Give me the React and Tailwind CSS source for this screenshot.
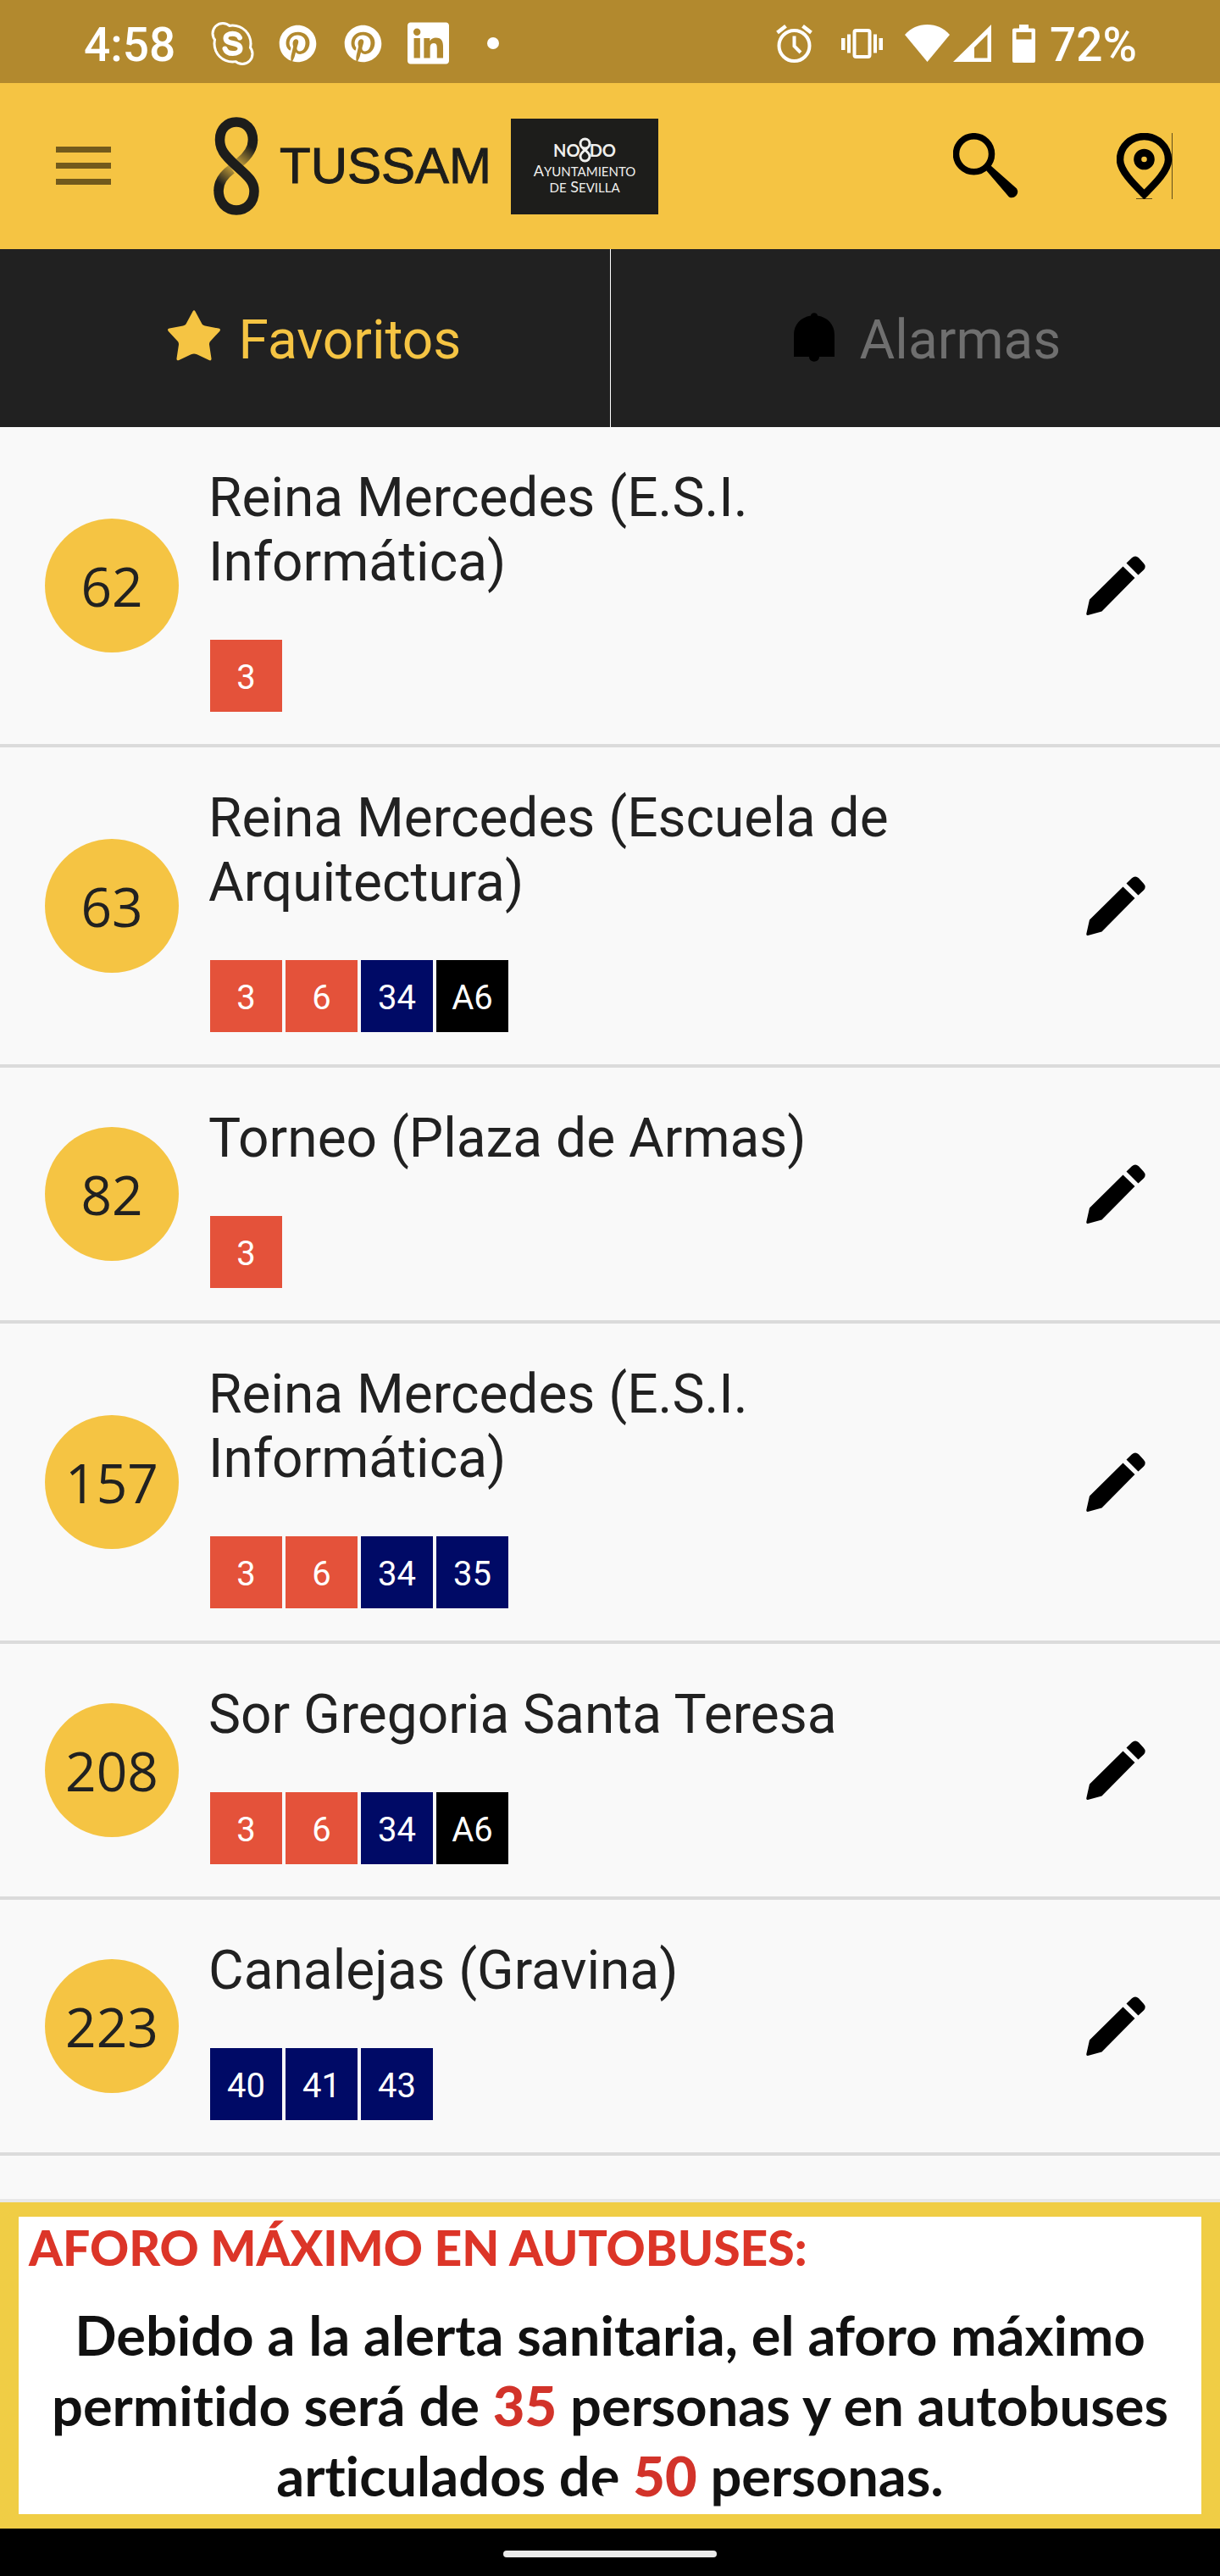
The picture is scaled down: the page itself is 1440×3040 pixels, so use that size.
import { FaLinkedin, FaPinterest } from "react-icons/fa";

const RED = "bg-[#e4523a]";
const NAVY = "bg-[#000a66]";
const BLACK = "bg-black";

const stops = [
  { id: 62, name: "Reina Mercedes (E.S.I. Informática)", lines: [["3", RED]] },
  {
    id: 63,
    name: "Reina Mercedes (Escuela de Arquitectura)",
    lines: [["3", RED], ["6", RED], ["34", NAVY], ["A6", BLACK]],
  },
  { id: 82, name: "Torneo (Plaza de Armas)", lines: [["3", RED]] },
  {
    id: 157,
    name: "Reina Mercedes (E.S.I. Informática)",
    lines: [["3", RED], ["6", RED], ["34", NAVY], ["35", NAVY]],
  },
  {
    id: 208,
    name: "Sor Gregoria Santa Teresa",
    lines: [["3", RED], ["6", RED], ["34", NAVY], ["A6", BLACK]],
  },
  { id: 223, name: "Canalejas (Gravina)", lines: [["40", NAVY], ["41", NAVY], ["43", NAVY]] },
];

function SkypeIcon() {
  return (
    <svg className="h-[51px] w-[51px]" viewBox="0 0 51 51" aria-hidden="true">
      <g fill="#fff">
        <circle cx="25.5" cy="25.5" r="23" />
        <circle cx="14" cy="13.5" r="13.5" />
        <circle cx="37" cy="37.5" r="13.5" />
      </g>
      <g fill="#b2892e">
        <circle cx="25.5" cy="25.5" r="20" />
        <circle cx="14" cy="13.5" r="10.5" />
        <circle cx="37" cy="37.5" r="10.5" />
      </g>
      <path
        d="M34 18.5C32.5 15 29.5 13.8 25.5 13.8c-4.5 0-8 2-8 5.400 0 8 17 3.600 17 12 0 3.800-4 5.900-8.700 5.900-4.800 0-8-1.900-9.300-5.600"
        fill="none"
        stroke="#fff"
        strokeWidth="6"
        strokeLinecap="round"
      />
    </svg>
  );
}

function AlarmIcon() {
  return (
    <svg className="h-[45px] w-[43px]" viewBox="0 0 43 45" fill="none" stroke="#fff" aria-hidden="true">
      <circle cx="21.5" cy="25" r="18" strokeWidth="4" />
      <path d="M1.5 9.5 11.5 1.800M41.5 9.5 31.5 1.800" strokeWidth="4.5" />
      <path d="M21.5 13.5v12l7.5 7.5" strokeWidth="4" />
    </svg>
  );
}

function VibrateIcon() {
  return (
    <svg className="h-[35px] w-[49px]" viewBox="0 0 49 35" aria-hidden="true">
      <rect x="15.5" y="2" width="18" height="31" rx="2" fill="none" stroke="#fff" strokeWidth="4" />
      <path d="M0 11h4.500v14H0zM7 6.500h4v22H7zM38 6.500h4v22h-4zM44.500 11H49v14h-4.500z" fill="#fff" />
    </svg>
  );
}

function WifiIcon() {
  return (
    <svg className="h-[44px] w-[53px]" viewBox="0 0 53 44" fill="#fff" aria-hidden="true">
      <path d="M0 12C7 4 16 0 26.5 0S46 4 53 12L26.5 44z" />
    </svg>
  );
}

function SignalIcon() {
  return (
    <svg className="h-[44px] w-[45px]" viewBox="0 0 45 44" fill="#fff" aria-hidden="true">
      <path fillRule="evenodd" d="M45 0v44H0zM40.5 11.5 25 27v12.500h15.500z" />
    </svg>
  );
}

function BatteryIcon() {
  return (
    <svg className="h-[45px] w-[27px]" viewBox="0 0 27 45" fill="#fff" aria-hidden="true">
      <path
        fillRule="evenodd"
        d="M8 0h11v4.500h6a2 2 0 0 1 2 2V43a2 2 0 0 1-2 2H2a2 2 0 0 1-2-2V6.500a2 2 0 0 1 2-2h6zM4.500 9v8.500h18V9z"
      />
    </svg>
  );
}

function StatusBar() {
  return (
    <div className="flex h-[98px] items-center justify-between bg-[#b2892e] pt-2 pr-[98px] pl-[99px] font-['Roboto',sans-serif] text-[55px] leading-none font-medium text-white">
      <div className="flex items-center">
        <span className="w-[109px] whitespace-nowrap">4:58</span>
        <div className="mb-1 ml-[41px] flex items-center">
          <SkypeIcon />
          <FaPinterest className="ml-[29px] h-[45px] w-[45px]" />
          <FaPinterest className="ml-8 h-[45px] w-[45px]" />
          <FaLinkedin className="ml-[30px] h-[56px] w-[49px]" />
          <span className="ml-[45px] h-3.5 w-3.5 rounded-full bg-white" />
        </div>
      </div>
      <div className="flex items-center">
        <div className="mb-1 flex items-center">
          <AlarmIcon />
          <span className="ml-[34px]"><VibrateIcon /></span>
          <span className="ml-[26px]"><WifiIcon /></span>
          <span className="ml-1"><SignalIcon /></span>
          <span className="ml-[25px]"><BatteryIcon /></span>
        </div>
        <span className="ml-[17px]">72%</span>
      </div>
    </div>
  );
}

function EightLogo() {
  return (
    <svg className="h-[116px] w-[54px]" viewBox="0 0 54 116" fill="none" strokeWidth="11.5" aria-hidden="true">
      <defs>
        <linearGradient id="fadeUp" gradientUnits="userSpaceOnUse" x1="45" y1="36" x2="31" y2="54">
          <stop offset="0" stopColor="#1d1d1b" />
          <stop offset="1" stopColor="#1d1d1b" stopOpacity="0.3" />
        </linearGradient>
        <linearGradient id="fadeDown" gradientUnits="userSpaceOnUse" x1="8" y1="79" x2="22" y2="62">
          <stop offset="0" stopColor="#1d1d1b" />
          <stop offset="1" stopColor="#1d1d1b" stopOpacity="0.3" />
        </linearGradient>
      </defs>
      <path d="M46.5 27C46.5 38 40.5 46 30.5 54" stroke="url(#fadeUp)" />
      <path d="M6 87C6 77 11 69 21.5 61.5" stroke="url(#fadeDown)" />
      <path
        d="M46.5 27.5C46.5 14 38 6 27 6S7.5 14 7.5 27c0 11 5 17.500 18 29.500S48 75 48 87.500C48 101 39 110 27 110S6 101 6 86.500"
        stroke="#1d1d1b"
      />
    </svg>
  );
}

function Brand() {
  return (
    <div className="flex items-center text-[#1d1d1b]">
      <EightLogo />
      <span className="ml-6 font-['Liberation_Sans',sans-serif] text-[60px] leading-none [-webkit-text-stroke:1px_#1d1d1b]">
        TUSSAM
      </span>
      <div className="ml-[23px] flex h-[113px] w-[174px] flex-col items-center justify-center bg-[#1d1d1b] font-['Lato',sans-serif] leading-none text-[#f0f0ee]">
        <div className="flex items-center text-[20px] leading-5 font-bold">
          NO
          <svg className="-mx-0.5 h-[30px] w-[15px]" viewBox="0 0 15 30" fill="none" stroke="#f0f0ee" strokeWidth="3" aria-hidden="true">
            <circle cx="7.5" cy="7.5" r="5.5" />
            <path d="M4.5 12.5C7 15 13 18 13 22.500a5.500 5.500 0 0 1-11 0C2 18 8 15 10.500 12.500" />
          </svg>
          DO
        </div>
        <span className="text-[18px] leading-[18px]">
          A<span className="text-[15px]">YUNTAMIENTO</span>
        </span>
        <span className="text-[18px] leading-[18px]">
          <span className="text-[15px]">DE</span> S<span className="text-[15px]">EVILLA</span>
        </span>
      </div>
    </div>
  );
}

function AppBar() {
  return (
    <header className="flex h-[196px] items-center bg-[#f5c443] pr-14 pl-[66px]">
      <button type="button" aria-label="Menú" className="mr-[121px] mb-0.5 flex w-[65px] flex-col gap-3">
        <span className="h-[7px] bg-[#725a1c]" />
        <span className="h-[7px] bg-[#725a1c]" />
        <span className="h-[7px] bg-[#725a1c]" />
      </button>
      <Brand />
      <button type="button" aria-label="Buscar" className="ml-auto">
        <svg className="h-[78px] w-[78px]" viewBox="0 0 78 78" aria-hidden="true">
          <circle cx="24.5" cy="24.700" r="21" fill="none" stroke="#000" strokeWidth="7.5" />
          <path d="M39 44 44.500 38.500 75 65.500A7 7 0 0 1 66 75.500z" />
        </svg>
      </button>
      <button type="button" aria-label="Paradas cercanas" className="ml-[115px]">
        <svg className="h-[78px] w-[66px]" viewBox="0 0 66 78" fill="none" stroke="#000" aria-hidden="true">
          <path d="M32.5 72.500C22 62 4 45 4 31.500a28.500 27.500 0 0 1 57 0C61 45 43 62 32.500 72.500z" strokeWidth="8.5" />
          <circle cx="32.5" cy="31" r="7.800" strokeWidth="9" />
          <path d="M65.5 0v78M23 77.500h19" strokeWidth="1" strokeOpacity="0.6" />
        </svg>
      </button>
    </header>
  );
}

function Tabs() {
  return (
    <nav className="grid h-[210px] grid-cols-2 bg-[#212121] font-['Roboto',sans-serif] text-[64px] leading-none">
      <button type="button" className="flex items-center justify-center pt-1.5 pl-[22px] text-[#f5c443]">
        <svg className="mr-[22px] mb-3 h-[60px] w-[62px]" viewBox="0 0 62 60" fill="currentColor" aria-hidden="true">
          <path d="M29.5 1.500c.8-1.800 2.200-1.800 3 0L40 15.500c.9 1.800 2 2.600 4 3l16 3c2 .3 2.600 1.900 1.200 3.400L50.500 36.500c-1.300 1.500-1.700 2.800-1.400 4.700L51.500 57c.3 2-1 3-2.800 2L34.500 52.300c-2.400-1.200-4.600-1.200-7 0L13.300 59c-1.800.9-3.100 0-2.800-2l2.400-15.800c.3-1.900-.1-3.200-1.400-4.700L.8 24.900C-.6 23.400 0 21.800 2 21.500l16-3c2-.4 3.100-1.200 4-3z" />
        </svg>
        Favoritos
      </button>
      <button type="button" className="flex items-center justify-center border-l border-white pt-1.5 pl-7 text-[#6f6f6f]">
        <svg className="mr-[30px] mb-2 h-[58px] w-[48px]" viewBox="0 0 48 58" fill="#000" aria-hidden="true">
          <path d="M20 3.500C20.500-.8 27.500-.8 28 3.500 40 5.500 48 14 48 26v26H30c0 7.500-12 7.500-12 0H0V26C0 14 8 5.500 20 3.500z" />
        </svg>
        Alarmas
      </button>
    </nav>
  );
}

function StopRow({ stop }) {
  return (
    <li className="flex items-center border-b-4 border-[#dbdbdb] pt-[46px] pr-[88px] pb-[38px] pl-[53px]">
      <span className="-mt-2 mr-[35px] flex h-[158px] w-[158px] shrink-0 items-center justify-center rounded-full bg-[#f5c443] pt-0.5 font-['Open_Sans',sans-serif] text-[64px] leading-none">
        {stop.id}
      </span>
      <div className="mr-20 flex-1">
        <h2 className="text-[64px] leading-[76px]">{stop.name}</h2>
        <ul className="mt-[53px] ml-0.5 flex gap-1 text-[40px] leading-none text-white">
          {stop.lines.map(([label, color]) => (
            <li key={label} className={`flex h-[85px] w-[85px] items-center justify-center pt-1 ${color}`}>
              {label}
            </li>
          ))}
        </ul>
      </div>
      <button type="button" aria-label={`Editar ${stop.name}`} className="-mt-2 shrink-0">
        <svg className="h-[70px] w-[70px]" viewBox="0 0 70 70" aria-hidden="true">
          <path d="M43.5 12.500 57.500 26 18.500 65.500 2 70Q0 70.200.3 68L4 51.500zM47.500 8.500 54 2.200Q58-1.200 62 2.200L67.700 8.500Q71.500 12.500 68 16.500L61.500 22.500z" />
        </svg>
      </button>
    </li>
  );
}

function Notice() {
  return (
    <section className="relative border-x-[22px] border-y-[17px] border-[#f0cd45] bg-white px-3 pb-1 font-['Lato',sans-serif] font-bold text-[#111] [font-variant-ligatures:none]">
      <h3 className="text-[57px] leading-[72px] font-black text-[#dc3528]">AFORO MÁXIMO EN AUTOBUSES:</h3>
      <p className="mt-[26px] text-center text-[65px] leading-[83px]">
        Debido a la alerta sanitaria, el aforo máximo
        <br />
        permitido será de <b className="font-black text-[#d2332a]">35</b> personas y en autobuses
        <br />
        articulados de <b className="font-black text-[#d2332a]">50</b> personas.
      </p>
      <span className="absolute bottom-[18px] left-1/2 h-5 w-5 -translate-x-1/2 rounded-full bg-white" />
    </section>
  );
}

export default function App() {
  return (
    <div className="flex min-h-screen flex-col bg-[#f9f9f9] font-['Roboto',sans-serif] text-[#212121]">
      <StatusBar />
      <AppBar />
      <Tabs />
      <ul className="flex-1">
        {stops.map((stop) => (
          <StopRow key={stop.id} stop={stop} />
        ))}
      </ul>
      <div className="h-1 bg-[#e8e8e8]" />
      <Notice />
      <div className="flex h-14 items-center justify-center bg-black pt-1">
        <span className="h-2 w-[252px] rounded-full bg-[#ebebeb]" />
      </div>
    </div>
  );
}
